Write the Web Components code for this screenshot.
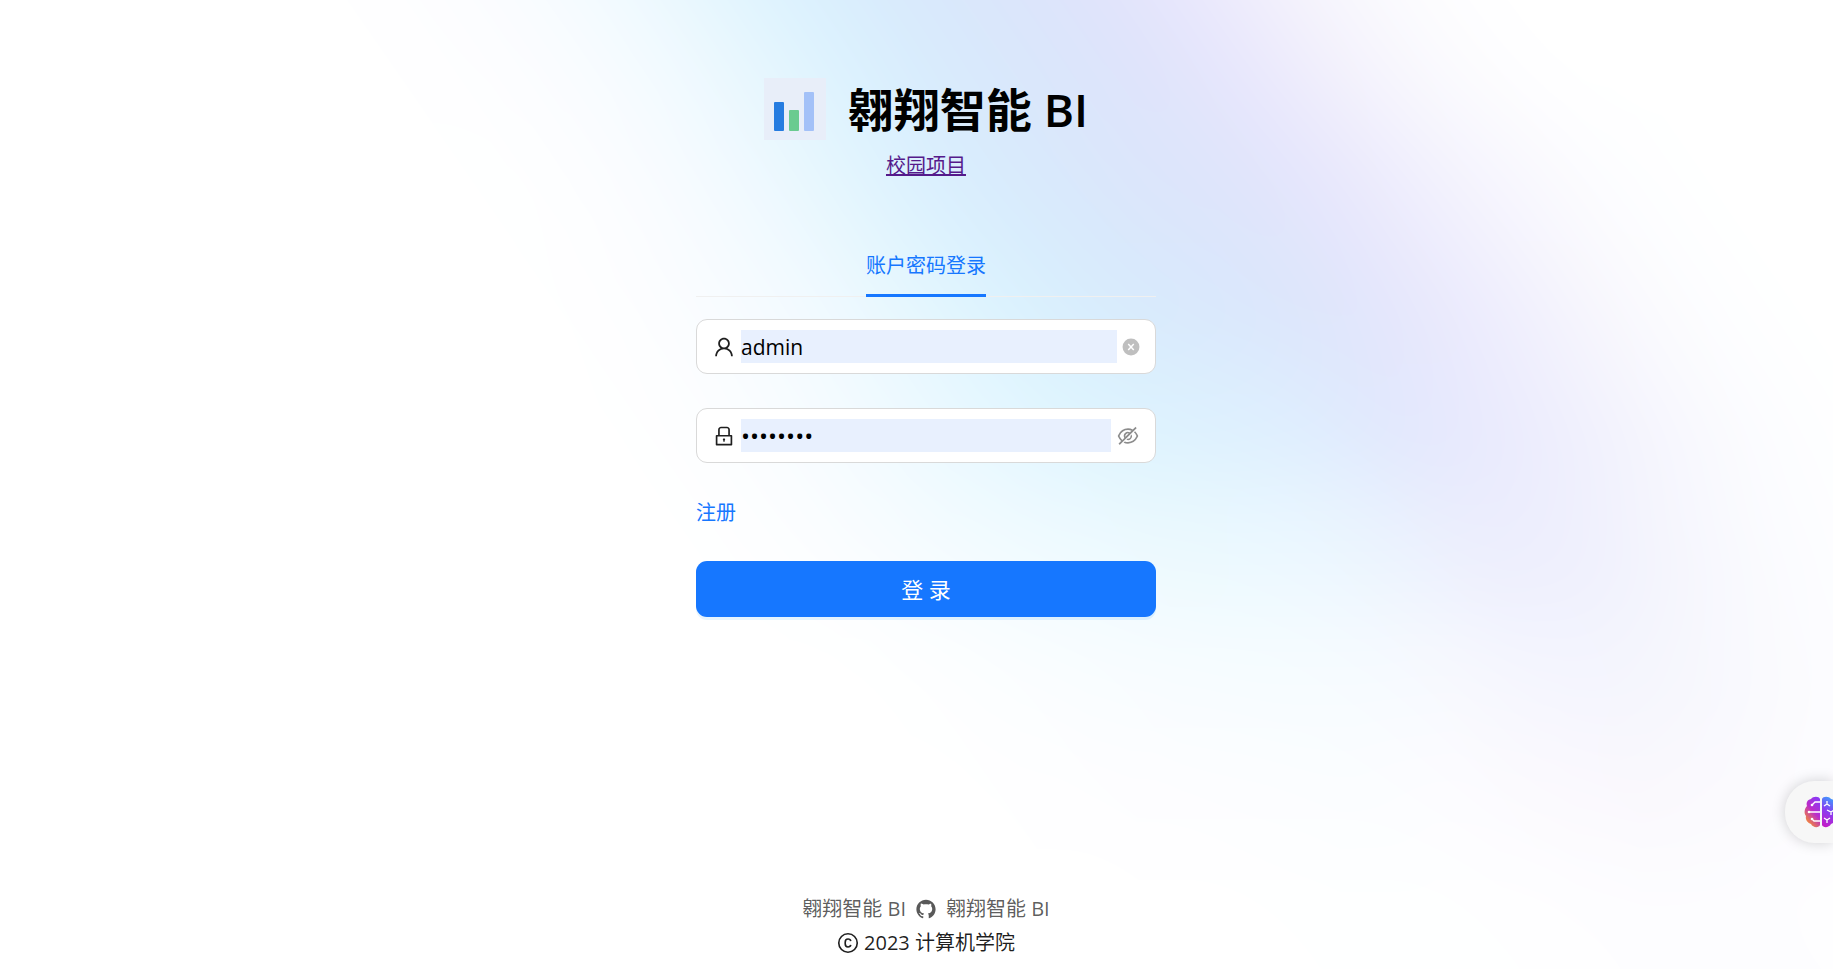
<!DOCTYPE html>
<html lang="zh-CN">
<head>
<meta charset="utf-8">
<meta name="viewport" content="width=device-width, initial-scale=1">
<title>翱翔智能 BI</title>
<style>
  body {
    margin: 0;
    background: #fff;
    color: rgba(0, 0, 0, 0.88);
    font: 20px/28px "Open Sans", "Noto Sans CJK SC", sans-serif;
  }
</style>
</head>
<body>
<login-page></login-page>

<script>
const define = (name, html, setup) => {
  const template = document.createElement('template');
  template.innerHTML = html;
  customElements.define(name, class extends HTMLElement {
    constructor() {
      super();
      this.attachShadow({ mode: 'open' }).append(template.content.cloneNode(true));
    }
    connectedCallback() {
      if (setup) setup(this, this.shadowRoot);
    }
  });
};

const icons = {
  user: '<path d="M858.5 763.6a374 374 0 00-80.6-119.5 375.63 375.63 0 00-119.5-80.6c-.4-.2-.8-.3-1.2-.5C719.5 518 760 444.7 760 362c0-137-111-248-248-248S264 225 264 362c0 82.7 40.5 156 102.8 201.1-.4.2-.8.3-1.2.5-44.8 18.9-85 46-119.5 80.6a375.63 375.63 0 00-80.6 119.5A371.7 371.7 0 00136 901.8a8 8 0 008 8.2h60c4.4 0 7.9-3.5 8-7.8 2-77.2 33-149.5 87.8-204.3 56.7-56.7 132-87.9 212.2-87.9s155.5 31.2 212.2 87.9C779 752.7 810 825 812 902.2c.1 4.4 3.6 7.8 8 7.8h60a8 8 0 008-8.2c-1-47.8-10.9-94.3-29.5-138.2zM512 534c-45.9 0-89.1-17.9-121.6-50.4S340 407.9 340 362c0-45.9 17.9-89.1 50.4-121.6S466.1 190 512 190s89.1 17.9 121.6 50.4S684 316.1 684 362c0 45.9-17.9 89.1-50.4 121.6S557.9 534 512 534z"/>',
  lock: '<path d="M832 464h-68V240c0-70.7-57.3-128-128-128H388c-70.7 0-128 57.3-128 128v224h-68c-17.7 0-32 14.3-32 32v384c0 17.7 14.3 32 32 32h640c17.7 0 32-14.3 32-32V496c0-17.7-14.3-32-32-32zM332 240c0-30.9 25.1-56 56-56h248c30.9 0 56 25.1 56 56v224H332V240zm460 600H232V536h560v304zM484 701v53c0 4.4 3.6 8 8 8h40c4.4 0 8-3.6 8-8v-53a48.01 48.01 0 10-56 0z"/>',
  clear: '<circle cx="512" cy="512" r="480"/><path d="M355 340L669 684M669 340L355 684" stroke="#fff" stroke-width="84"/>',
  eye: '<path d="M942.2 486.2Q889.47 375.11 816.7 305l-50.88 50.88C807.31 395.53 843.45 447.4 874.7 512 791.5 684.2 673.4 766 512 766q-72.67 0-133.87-22.38L323 798.75Q408 838 512 838q288.3 0 430.2-300.3a60.29 60.29 0 000-51.5zm-63.57-320.64L836 122.88a8 8 0 00-11.32 0L715.31 232.2Q624.86 186 512 186q-288.3 0-430.2 300.3a60.3 60.3 0 000 51.5q56.69 119.4 136.5 191.41L112.48 835a8 8 0 000 11.31L155.17 889a8 8 0 0011.31 0l712.15-712.12a8 8 0 000-11.32zM149.3 512C232.6 339.8 350.7 258 512 258c54.54 0 104.13 9.36 149.12 28.39l-70.3 70.3a176 176 0 00-238.13 238.13l-83.42 83.42C223.1 637.49 183.3 582.28 149.3 512zm246.7 0a112.11 112.11 0 01146.2-106.69L401.31 546.2A112 112 0 01396 512z"/><path d="M508 624c-3.46 0-6.87-.16-10.25-.47l-52.82 52.82a176.09 176.09 0 00227.42-227.42l-52.82 52.82c.31 3.38.47 6.79.47 10.25a111.94 111.94 0 01-112 112z"/>',
  github: '<path d="M511.6 76.3C264.3 76.2 64 276.4 64 523.5 64 718.9 189.3 885 363.8 946c23.5 5.9 19.9-10.8 19.9-22.2v-77.5c-135.7 15.9-141.2-73.9-150.3-88.9C215 726 171.5 718 184.5 703c30.9-15.9 62.4 4 98.9 57.9 26.4 39.1 77.9 32.5 104 26 5.7-23.5 17.9-44.5 34.7-60.8-140.6-25.2-199.2-111-199.2-213 0-49.5 16.3-95 48.3-131.7-20.4-60.5 1.9-112.3 4.9-120 58.1-5.2 118.5 41.6 123.2 45.3 33-8.9 70.7-13.6 112.9-13.6 42.4 0 80.2 4.9 113.5 13.9 11.3-8.6 67.3-48.8 121.3-43.9 2.9 7.7 24.7 58.3 5.5 118 32.4 36.8 48.9 82.7 48.9 132.3 0 102.2-59 188.1-200 212.9a127.5 127.5 0 0138.1 91v112.5c.8 9 0 17.9 15 17.9 177.1-59.7 304.6-227 304.6-424.1 0-247.2-200.4-447.3-447.5-447.3z"/>',
  copyright: '<g fill="none" stroke="currentColor" stroke-width="76"><circle cx="512" cy="512" r="430"/><path d="M640 425C632 366 584 327 512 327C427 327 382 388 382 480V544C382 636 427 697 512 697C584 697 632 660 640 604"/></g>'
};

define('ui-icon', `
  <style>
    :host { display: inline-flex; flex: none; width: 24px; height: 24px; }
    svg { width: 100%; height: 100%; fill: currentColor; }
  </style>
  <svg viewBox="0 0 1024 1024" aria-hidden="true"></svg>`,
  (host, root) => { root.querySelector('svg').innerHTML = icons[host.getAttribute('name')]; });

/*
 * Mesh gradient. Each row lists its cell colours from left to right; the cells
 * are slanted along the light band and blurred into one another.
 */
const mesh = [
  'ffffff fefeff fbfcff f4fbff e8f7fe dbf2fe d8eafc dae6fb dfe3fb e9e7fc f4f2fc fbfbfe ffffff ffffff',
  'ffffff feffff fbfcff f3faff e6f7fe daf0fe d8eafc dbe6fb dee4fb e7e6fc f1f0fd f9f8fe fdfeff ffffff',
  'ffffff fefeff f9fcff f2faff e5f7fe daf2fe d8ebfc d9e8fc dde5fb e7e7fc f0effd f9f8fd fdfeff ffffff',
  'ffffff fdfeff f8fcff effaff e5f7ff ddf4fe ddf1fe deeefe e1e7fd eaeafd f1f1fd f9f9fe fdfeff ffffff',
  'ffffff fdfeff f8fcff f2fbff eefaff ebf9fe ebf8ff ebf4fe ecedfd eeeffd f6f6fd fbfcff fefeff ffffff',
  'ffffff ffffff fcfeff f9fdff f7fcff f6fcff f6fbff f7f8fe f3f4fe f5f6fd fafafe fdfdff feffff ffffff',
  'ffffff ffffff fefeff fdfdff fcfdff fbfdff fcfcff fbf9fe faf8fd fbfafe fdfdff feffff ffffff ffffff',
  'ffffff ffffff ffffff ffffff feffff feffff fefeff fdfdff fdfdff fefeff ffffff ffffff ffffff ffffff'
].map(row => row.split(' '));

define('aurora-backdrop', `
  <style>
    :host { display: block; overflow: hidden; }
    svg { display: block; width: 100%; height: 100%; }
  </style>
  <svg viewBox="0 0 1834 968" preserveAspectRatio="none" aria-hidden="true">
    <filter id="melt" filterUnits="userSpaceOnUse" x="-262" y="-242" width="2358" height="1452" color-interpolation-filters="sRGB">
      <feGaussianBlur stdDeviation="46"/>
    </filter>
    <g filter="url(#melt)" shape-rendering="crispEdges"></g>
  </svg>`,
  (host, root) => {
    const cells = ['<rect x="-262" y="-242" width="2358" height="1452" fill="#fff"/>'];
    const [width, height, slant, start] = [100, 121, 84, 250];
    for (let r = -2; r < 10; r++) {
      const row = mesh[Math.max(0, Math.min(7, r))];
      row.forEach((colour, c) => {
        const x = start + c * width + r * slant;
        cells.push(`<path d="M${x} ${r * height}h${width}l${slant} ${height}h-${width}z" fill="#${colour}"/>`);
      });
    }
    root.querySelector('g').innerHTML = cells.join('');
  });

define('brand-header', `
  <style>
    :host { display: flex; flex-direction: column; align-items: center; gap: 12px; }
    .brand { display: flex; align-items: center; gap: 22px; }
    svg { width: 62px; height: 62px; }
    h1 { margin: 0; color: #000; font-size: 46px; line-height: 62px; font-weight: 700; white-space: nowrap; }
    h1 span { font-weight: 600; }
    a { color: #551a8b; }
  </style>
  <div class="brand">
    <svg viewBox="0 0 62 62" aria-hidden="true">
      <rect width="62" height="62" fill="#e8eef9"/>
      <rect x="10" y="24" width="10" height="29" rx="1" fill="#267ce0"/>
      <rect x="25" y="32" width="10" height="21" rx="1" fill="#6acb90"/>
      <rect x="40" y="14" width="10" height="39" rx="1" fill="#a3c1f8"/>
    </svg>
    <h1>翱翔智能 <span>BI</span></h1>
  </div>
  <a href="#project">校园项目</a>`);

define('login-tabs', `
  <style>
    :host { display: flex; justify-content: center; border-bottom: 1px solid #f0f0f0; }
    button {
      margin: 0 0 -1px; padding: 16px 0 14px; border: 0; border-bottom: 3px solid #1677ff;
      background: none; color: #1677ff; font: inherit; cursor: pointer;
    }
  </style>
  <button type="button" role="tab" aria-selected="true"><slot></slot></button>`);

define('login-field', `
  <style>
    :host {
      display: flex; align-items: center; box-sizing: border-box; height: 55px; padding: 0 15px;
      border: 1px solid #d9d9d9; border-radius: 11px; background: #fff;
    }
    label { display: inline-flex; margin: 0 5px 0 0; }
    input {
      flex: 1; min-width: 0; height: 33px; box-sizing: border-box; margin: 0; padding: 0; border: 0; outline: 0;
      background: #e8f0fe; color: #000; font: inherit; font-size: 21px;
    }
    input[type="password"] { font-size: 24px; }
    button { display: inline-flex; margin: 0 0 0 5px; padding: 0; border: 0; background: none; color: #8c8c8c; cursor: pointer; }
    .clear { color: #bfbfbf; }
    .clear ui-icon { width: 18px; height: 18px; }
  </style>
  <label for="control"><ui-icon></ui-icon></label>
  <input id="control">
  <button type="button"><ui-icon></ui-icon></button>`,
  (host, root) => {
    const secret = host.getAttribute('type') === 'password';
    const [prefix, suffix] = root.querySelectorAll('ui-icon');
    const input = root.querySelector('input');
    const button = root.querySelector('button');
    input.type = host.getAttribute('type');
    input.value = host.getAttribute('value');
    input.setAttribute('aria-label', host.getAttribute('label'));
    for (const [icon, name] of [[prefix, secret ? 'lock' : 'user'], [suffix, secret ? 'eye' : 'clear']]) {
      icon.setAttribute('name', name);
      icon.shadowRoot.querySelector('svg').innerHTML = icons[name];
    }
    button.className = secret ? 'reveal' : 'clear';
    button.setAttribute('aria-label', secret ? '显示密码' : '清除');
    button.onclick = () => {
      if (secret) input.type = input.type === 'password' ? 'text' : 'password';
      else input.value = '';
    };
  });

define('login-form', `
  <style>
    :host { display: block; width: 100%; max-width: 460px; }
    form { display: flex; flex-direction: column; }
    login-tabs { margin-bottom: 22px; }
    login-field { margin-bottom: 34px; }
    a { align-self: flex-start; margin: 2px 0 34px; color: #1677ff; text-decoration: none; }
    .submit {
      height: 56px; border: 0; border-radius: 11px; background: #1677ff; color: #fff;
      font: inherit; font-size: 22px; box-shadow: 0 3px 0 rgba(5, 145, 255, 0.1); cursor: pointer;
    }
  </style>
  <form>
    <login-tabs>账户密码登录</login-tabs>
    <login-field type="text" value="admin" label="用户名"></login-field>
    <login-field type="password" value="12345678" label="密码"></login-field>
    <a href="#register">注册</a>
    <button class="submit" type="button">登 录</button>
  </form>`);

define('page-footer', `
  <style>
    :host { display: flex; flex-direction: column; align-items: center; gap: 6px; }
    nav, div { display: flex; align-items: center; }
    nav { gap: 9px; }
    div { gap: 5px; }
    a { display: inline-flex; color: rgba(0, 0, 0, 0.65); text-decoration: none; white-space: pre; }
    ui-icon { width: 22px; height: 22px; }
  </style>
  <nav>
    <a href="#home">翱翔智能 BI</a>
    <a href="#github" aria-label="GitHub"><ui-icon name="github"></ui-icon></a>
    <a href="#about">翱翔智能 BI</a>
  </nav>
  <div><ui-icon name="copyright"></ui-icon><span>2023 计算机学院</span></div>`);

define('assistant-button', `
  <style>
    :host { display: block; }
    button {
      display: flex; align-items: center; width: 48px; height: 62px; padding: 0 0 0 19px; border: 0;
      border-radius: 30px 0 0 30px; background: #f7f7f7; box-shadow: 0 0 14px rgba(0, 0, 0, 0.18);
      overflow: hidden; cursor: pointer;
    }
    svg { flex: none; width: 34px; height: 32px; }
  </style>
  <button type="button" aria-label="智能助手">
    <svg viewBox="0 0 34 32" aria-hidden="true">
      <defs>
        <linearGradient id="left" x1="0.8" y1="0" x2="0.2" y2="1">
          <stop offset="0" stop-color="#8a3af5"/><stop offset="0.45" stop-color="#bb2bcb"/><stop offset="0.7" stop-color="#d9607a"/><stop offset="1" stop-color="#ff9a1f"/>
        </linearGradient>
        <linearGradient id="right" x1="0.6" y1="0" x2="0.3" y2="1">
          <stop offset="0" stop-color="#3aa0ff"/><stop offset="0.5" stop-color="#8a3cf0"/><stop offset="1" stop-color="#c21cc8"/>
        </linearGradient>
      </defs>
      <path d="M16 3C15 0 9 0 7 3C3 4 2 7 3 10C0 13 0 18 2 20C1 24 4 27 7 28C9 32 15 32 16 29Z" fill="url(#left)"/>
      <path d="M18 3C19 0 25 0 27 3C31 4 32 7 31 10C34 13 34 18 32 20C33 24 30 27 27 28C25 32 19 32 18 29Z" fill="url(#right)"/>
      <g fill="none" stroke="#fff" stroke-width="1.3">
        <path d="M16 6H11L8 9M5 16H16M16 25H10L8 23M20 10L23 8L26 10M23 8V5M23 14L27 16L30 14M27 16V19M20 22L23 24L26 22M23 24V27"/>
      </g>
      <g fill="#fff"><circle cx="8" cy="9" r="1.3"/><circle cx="5" cy="16" r="1.3"/><circle cx="8" cy="23" r="1.3"/></g>
    </svg>
  </button>`);

define('login-page', `
  <style>
    :host {
      position: relative; display: flex; flex-direction: column; box-sizing: border-box;
      min-height: 100vh; padding: 78px 0 12px 19px; isolation: isolate;
    }
    aurora-backdrop { position: absolute; inset: 0; z-index: -1; }
    main { flex: 1; display: flex; flex-direction: column; align-items: center; gap: 56px; padding-bottom: 48px; }
    assistant-button { position: fixed; right: 0; bottom: 126px; }
  </style>
  <aurora-backdrop></aurora-backdrop>
  <main>
    <brand-header></brand-header>
    <login-form></login-form>
  </main>
  <page-footer></page-footer>
  <assistant-button></assistant-button>`);
</script>
</body>
</html>
